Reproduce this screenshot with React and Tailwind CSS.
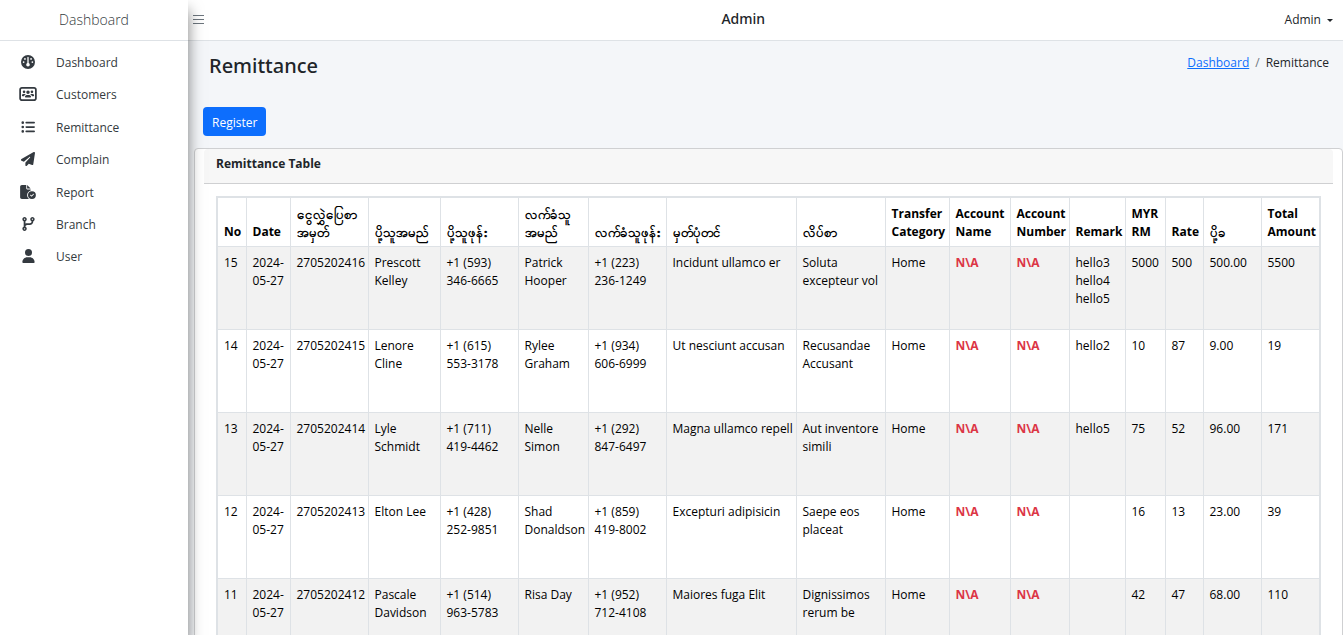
import { FaGauge, FaUsersRectangle, FaListUl, FaPaperPlane, FaFileCircleCheck, FaCodeBranch, FaUser } from "react-icons/fa6";

const menu = [
  ["Dashboard", FaGauge, "w-[14px]"],
  ["Customers", FaUsersRectangle, "w-[18px]"],
  ["Remittance", FaListUl, "w-[14px]"],
  ["Complain", FaPaperPlane, "w-[14px]"],
  ["Report", FaFileCircleCheck, "w-4"],
  ["Branch", FaCodeBranch, "w-[13px]"],
  ["User", FaUser, "w-[13px]"],
];

const columns = [
  ["No", 29],
  ["Date", 44],
  ["ငွေလွှဲပြေစာ အမှတ်", 78],
  ["ပို့သူအမည်", 72],
  ["ပို့သူဖုန်း", 78],
  ["လက်ခံသူ အမည်", 70],
  ["လက်ခံသူဖုန်း", 78],
  ["မှတ်ပုံတင်", 130],
  ["လိပ်စာ", 89],
  ["Transfer Category", 64],
  ["Account Name", 61],
  ["Account Number", 59],
  ["Remark", 56],
  ["MYR RM", 40],
  ["Rate", 38],
  ["ပို့ခ", 58],
  ["Total Amount", 59],
];

const isMyanmar = (text) => /[\u1000-\u109f]/.test(text);

const rows = [
  ["15", "2024-05-27", "2705202416", "Prescott Kelley", "+1 (593) 346-6665", "Patrick Hooper", "+1 (223) 236-1249", "Incidunt ullamco er", "Soluta excepteur vol", "Home", "N\\A", "N\\A", "hello3 hello4 hello5", "5000", "500", "500.00", "5500"],
  ["14", "2024-05-27", "2705202415", "Lenore Cline", "+1 (615) 553-3178", "Rylee Graham", "+1 (934) 606-6999", "Ut nesciunt accusan", "Recusandae Accusant", "Home", "N\\A", "N\\A", "hello2", "10", "87", "9.00", "19"],
  ["13", "2024-05-27", "2705202414", "Lyle Schmidt", "+1 (711) 419-4462", "Nelle Simon", "+1 (292) 847-6497", "Magna ullamco repell", "Aut inventore simili", "Home", "N\\A", "N\\A", "hello5", "75", "52", "96.00", "171"],
  ["12", "2024-05-27", "2705202413", "Elton Lee", "+1 (428) 252-9851", "Shad Donaldson", "+1 (859) 419-8002", "Excepturi adipisicin", "Saepe eos placeat", "Home", "N\\A", "N\\A", "", "16", "13", "23.00", "39"],
  ["11", "2024-05-27", "2705202412", "Pascale Davidson", "+1 (514) 963-5783", "Risa Day", "+1 (952) 712-4108", "Maiores fuga Elit", "Dignissimos rerum be", "Home", "N\\A", "N\\A", "", "42", "47", "68.00", "110"],
];

function Sidebar() {
  return (
    <aside className="relative z-10 w-[188px] shrink-0 bg-white shadow-[0_10px_14px_rgba(0,0,0,0.5)]">
      <div className="flex h-[41px] items-center justify-center border-b border-[#dee2e6] text-sm font-light text-[#343a40]">
        Dashboard
      </div>
      <nav className="flex flex-col pt-[6px]">
        {menu.map(([label, Icon, width]) => (
          <a key={label} href="#" className="flex h-8 items-center gap-[18px] px-[18px] text-[#343a40] nth-2:mb-px nth-4:mb-px">
            <span className="flex w-5 justify-center pb-[2px]"><Icon className={`h-[14px] ${width}`} /></span>
            <span>{label}</span>
          </a>
        ))}
      </nav>
    </aside>
  );
}

function RemittanceTable() {
  return (
    <table className="w-full table-fixed border-collapse border-2 border-[#dee2e6] bg-white text-black">
      <colgroup>
        {columns.map(([name, width]) => <col key={name} style={{ width }} />)}
      </colgroup>
      <thead>
        <tr className="h-[49px]">
          {columns.map(([name]) => (
            <th key={name} className={`border border-[#dee2e6] pl-[6px] pb-[5px] text-left align-bottom font-bold ${isMyanmar(name) ? "text-[13px] leading-[18px]" : ""}`}>{name}</th>
          ))}
        </tr>
      </thead>
      <tbody>
        {rows.map((row) => (
          <tr key={row[0]} className="h-[83px] odd:bg-[#f2f2f2]">
            {row.map((cell, i) => (
              <td key={i} className={`border border-[#dee2e6] pl-[6px] pt-[7px] align-top ${cell === "N\\A" ? "font-bold text-[#dc3545]" : ""}`}>{cell}</td>
            ))}
          </tr>
        ))}
      </tbody>
    </table>
  );
}

export default function App() {
  return (
    <div className="flex h-screen overflow-hidden bg-[#f4f6f9] font-['Segoe_UI','Open_Sans','Noto_Sans',sans-serif] text-xs leading-[18px] text-[#212529]">
      <Sidebar />
      <div className="flex min-w-0 flex-1 flex-col">
        <header className="flex h-[41px] shrink-0 items-center justify-between border-b border-[#dee2e6] bg-white pl-1 pr-[10px]">
          <button type="button" aria-label="Toggle menu" className="w-4 pb-[2px] text-[#6c757d]">
            <svg viewBox="0 0 13 12" className="w-[13px]" fill="none" stroke="currentColor"><path d="M1 2.5h11M1 6.5h11M1 10.5h11" /></svg>
          </button>
          <h1 className="pr-[6px] pb-[2px] font-['Segoe_UI','Noto_Sans',sans-serif] text-sm font-medium">Admin</h1>
          <button type="button" className="flex items-center gap-[6px]">
            Admin
            <svg viewBox="0 0 6 3" className="w-[6px]" fill="currentColor"><path d="M0 0h6L3 3z" /></svg>
          </button>
        </header>
        <main className="flex flex-col pl-[6px]">
          <div className="flex items-start justify-between pl-[15px] pr-[14px] pt-[13px]">
            <h2 className="font-['Segoe_UI','Noto_Sans',sans-serif] text-xl leading-6 font-medium">Remittance</h2>
            <nav aria-label="Breadcrumb" className="flex gap-[6px]">
              <a href="#" className="text-[#0d6efd] underline">Dashboard</a>
              <span className="text-[#6c757d]">/</span>
              <span>Remittance</span>
            </nav>
          </div>
          <button type="button" className="mt-[29px] ml-[9px] h-[29px] self-start rounded bg-[#0d6efd] px-[9px] pt-[2px] text-white">Register</button>
          <section className="mt-3 rounded border border-[#cfd0d2] bg-white px-[9px]">
            <h3 className="rounded-t border-b border-[#cfd0d2] bg-[#f7f7f7] px-3 pt-[6px] pb-[10px] font-bold">Remittance Table</h3>
            <div className="px-3 py-3">
              <RemittanceTable />
            </div>
          </section>
        </main>
      </div>
    </div>
  );
}
